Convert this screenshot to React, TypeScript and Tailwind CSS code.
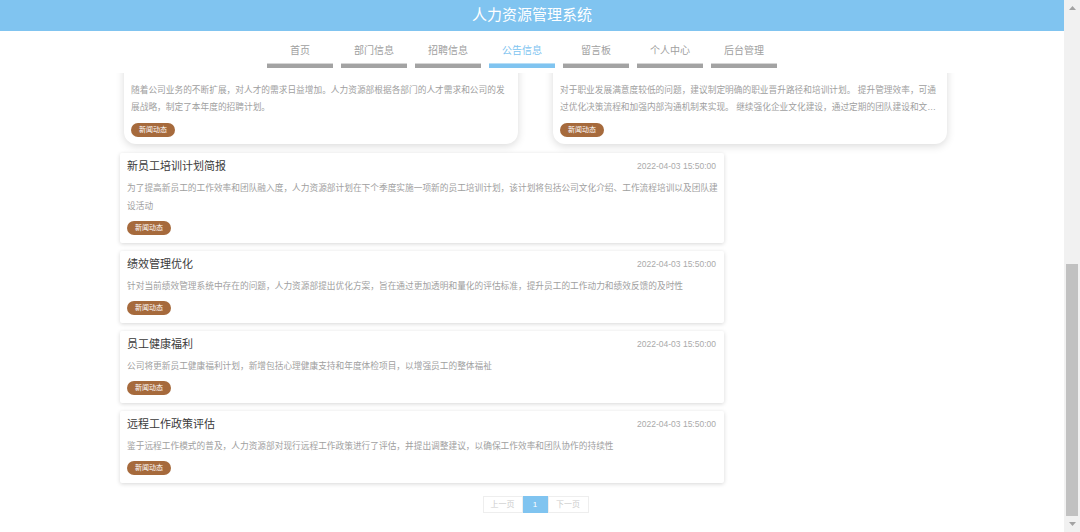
type Notice = { title: string; date: string; desc: string }

const navItems = ['首页', '部门信息', '招聘信息', '公告信息', '留言板', '个人中心', '后台管理']

const featured: Notice[] = [
    {
        title: '年度招聘计划',
        date: '2022-04-03 15:50:00',
        desc: '随着公司业务的不断扩展，对人才的需求日益增加。人力资源部根据各部门的人才需求和公司的发展战略，制定了本年度的招聘计划。',
    },
    {
        title: '员工满意度调查结果',
        date: '2022-04-03 15:50:00',
        desc: '对于职业发展满意度较低的问题，建议制定明确的职业晋升路径和培训计划。 提升管理效率，可通过优化决策流程和加强内部沟通机制来实现。 继续强化企业文化建设，通过定期的团队建设和文化活动，增强员工的归属感。',
    },
]

const notices: Notice[] = [
    {
        title: '新员工培训计划简报',
        date: '2022-04-03 15:50:00',
        desc: '为了提高新员工的工作效率和团队融入度，人力资源部计划在下个季度实施一项新的员工培训计划，该计划将包括公司文化介绍、工作流程培训以及团队建设活动',
    },
    {
        title: '绩效管理优化',
        date: '2022-04-03 15:50:00',
        desc: '针对当前绩效管理系统中存在的问题，人力资源部提出优化方案，旨在通过更加透明和量化的评估标准，提升员工的工作动力和绩效反馈的及时性',
    },
    {
        title: '员工健康福利',
        date: '2022-04-03 15:50:00',
        desc: '公司将更新员工健康福利计划，新增包括心理健康支持和年度体检项目，以增强员工的整体福祉',
    },
    {
        title: '远程工作政策评估',
        date: '2022-04-03 15:50:00',
        desc: '鉴于远程工作模式的普及，人力资源部对现行远程工作政策进行了评估，并提出调整建议，以确保工作效率和团队协作的持续性',
    },
]

function Badge() {
    return (
        <span className="inline-block h-[14px] px-[8px] rounded-full bg-[#a66a3c] text-white text-[7px] leading-[14px]">
            新闻动态
        </span>
    )
}

function ScrollArrow({ up }: { up?: boolean }) {
    return (
        <div className="h-[16px] flex items-center justify-center">
            <svg width="7" height="4" viewBox="0 0 7 4">
                <polygon points={up ? '3.5,0 7,4 0,4' : '0,0 7,0 3.5,4'} fill="#a3a3a3" />
            </svg>
        </div>
    )
}

export default function App() {
    return (
        <div className="h-[532px] flex bg-white overflow-hidden font-['Liberation_Sans','Noto_Sans_CJK_SC',sans-serif]">
            <div className="flex-1 min-w-0 flex flex-col">
                {/* Header */}
                <div className="h-[31px] shrink-0 bg-[#80c4f0] flex items-center justify-center text-white text-[15px]">
                    人力资源管理系统
                </div>

                {/* Nav */}
                <nav className="h-[42px] shrink-0 bg-white flex justify-center pr-[20px]">
                    {navItems.map(item => (
                        <div key={item} className="w-[66px] mx-[4px] flex flex-col items-center pt-[13px]">
                            <span
                                className={
                                    item === '公告信息'
                                        ? 'text-[10px] leading-[14px] text-[#80c4f0]'
                                        : 'text-[10px] leading-[14px] text-[#a0a0a0]'
                                }
                            >
                                {item}
                            </span>
                            <div
                                className={
                                    item === '公告信息'
                                        ? 'mt-[5px] w-full h-[5px] bg-[#80c4f0] border-t border-[#b8def6]'
                                        : 'mt-[5px] w-full h-[5px] bg-[#a3a3a3] border-t border-[#d6d6d6]'
                                }
                            />
                        </div>
                    ))}
                </nav>

                {/* Content, scrolled to the bottom: overflow is clipped at the top */}
                <div className="flex-1 min-h-0 overflow-hidden flex flex-col justify-end pl-[120px] pb-[19px]">
                    <div className="w-[831px] shrink-0">
                        {/* Featured notices */}
                        <div className="px-[4px] grid grid-cols-2 gap-x-[35px]">
                            {featured.map(n => (
                                <div
                                    key={n.title}
                                    className="rounded-[12px] bg-white px-[7px] pt-[7px] pb-[7px] shadow-[0_2px_8px_rgba(0,0,0,0.15)]"
                                >
                                    <div className="flex justify-between items-center h-[18px]">
                                        <span className="text-[11px] text-[#3a3a3a]">{n.title}</span>
                                        <span className="text-[8.5px] text-[#aaa]">{n.date}</span>
                                    </div>
                                    <p className="mt-[12px] text-[8.7px] leading-[17px] text-[#a0a0a0] line-clamp-2">{n.desc}</p>
                                    <div className="mt-[7px] flex">
                                        <Badge />
                                    </div>
                                </div>
                            ))}
                        </div>

                        {/* Notice list */}
                        <div className="mt-[9px] w-[604px] flex flex-col gap-[8px]">
                            {notices.map(n => (
                                <div
                                    key={n.title}
                                    className="bg-white rounded-[2px] pl-[7px] pr-[8px] pt-[4px] pb-[8px] shadow-[0_1px_4px_rgba(0,0,0,0.16)]"
                                >
                                    <div className="flex justify-between items-center h-[18px]">
                                        <span className="text-[11px] text-[#3a3a3a]">{n.title}</span>
                                        <span className="text-[8.5px] text-[#aaa]">{n.date}</span>
                                    </div>
                                    <p className="mt-[4px] -mr-[4px] text-[8.7px] leading-[18px] text-[#a0a0a0]">{n.desc}</p>
                                    <div className="mt-[6px] flex">
                                        <Badge />
                                    </div>
                                </div>
                            ))}
                        </div>

                        {/* Pagination */}
                        <div className="mt-[13px] flex justify-center">
                            <div className="flex h-[17px] text-[8px] leading-[15px]">
                                <span className="w-[40px] text-center border border-[#eee] text-[#ccc]">上一页</span>
                                <span className="w-[25px] text-center bg-[#80c4f0] border border-[#80c4f0] text-white">1</span>
                                <span className="w-[41px] text-center border border-[#eee] text-[#ccc]">下一页</span>
                            </div>
                        </div>
                    </div>
                </div>
            </div>

            {/* Browser scrollbar */}
            <div className="w-[16px] shrink-0 bg-[#f1f1f1] flex flex-col">
                <ScrollArrow up />
                <div className="flex-1 flex flex-col justify-end px-[2px]">
                    <div className="h-[252px] bg-[#c1c1c1]" />
                </div>
                <ScrollArrow />
            </div>
        </div>
    )
}
